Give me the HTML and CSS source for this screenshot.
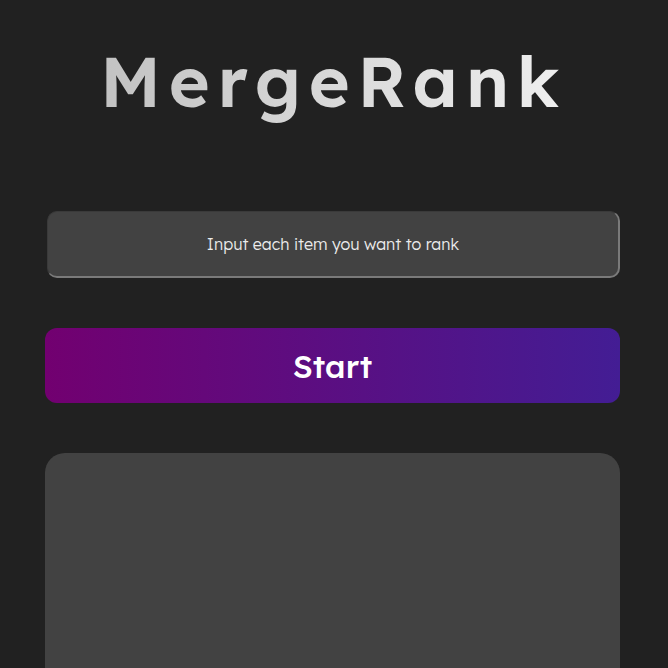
FILE: index.html
```html
<!DOCTYPE html>
<html>
<head>
<meta charset="utf-8">
<link rel="stylesheet" href="styles.css">
</head>
<body>
<main class="page">
  <h1 class="title">MergeRank</h1>
  <div class="input-box">Input each item you want to rank</div>
  <button class="start">Start</button>
  <section class="results"></section>
</main>
</body>
</html>
```
FILE: styles.css
```css
html, body {
  margin: 0;
  padding: 0;
  background: #212121;
}
.page {
  display: flex;
  flex-direction: column;
  padding: 0 48px 0 45px;
  font-family: "Lexend", "Inter", "Noto Sans", sans-serif;
}
.title {
  margin: 36px 0 0 0;
  height: 90px;
  text-align: center;
  font-family: "Lexend", "Inter", sans-serif;
  font-weight: 600;
  font-size: 70px;
  line-height: 90px;
  letter-spacing: 7.6px;
  padding-left: 2px;
  background: linear-gradient(90deg, #bdbdbd, #f4f4f4);
  -webkit-background-clip: text;
  background-clip: text;
  color: transparent;
}
.input-box {
  margin: 85px 0 0 2px;
  height: 64px;
  background: #424242;
  border-radius: 10px;
  border-top: 1px solid #3a3a3a;
  border-left: 1px solid #3a3a3a;
  border-right: 2px solid #7a7a7a;
  border-bottom: 2px solid #7a7a7a;
  color: #ececec;
  font-size: 16px;
  font-weight: 300;
  display: flex;
  align-items: center;
  justify-content: center;
}
.start {
  margin-top: 50px;
  height: 75px;
  border: none;
  border-radius: 12px;
  background: linear-gradient(90deg, #720070, #431d94);
  color: #fff;
  font-family: "Lexend", "Inter", "Noto Sans", sans-serif;
  font-size: 32px;
  font-weight: 500;
  padding: 0;
}
.results {
  margin-top: 50px;
  height: 215px;
  background: #424242;
  border-radius: 20px 20px 0 0;
}
```
